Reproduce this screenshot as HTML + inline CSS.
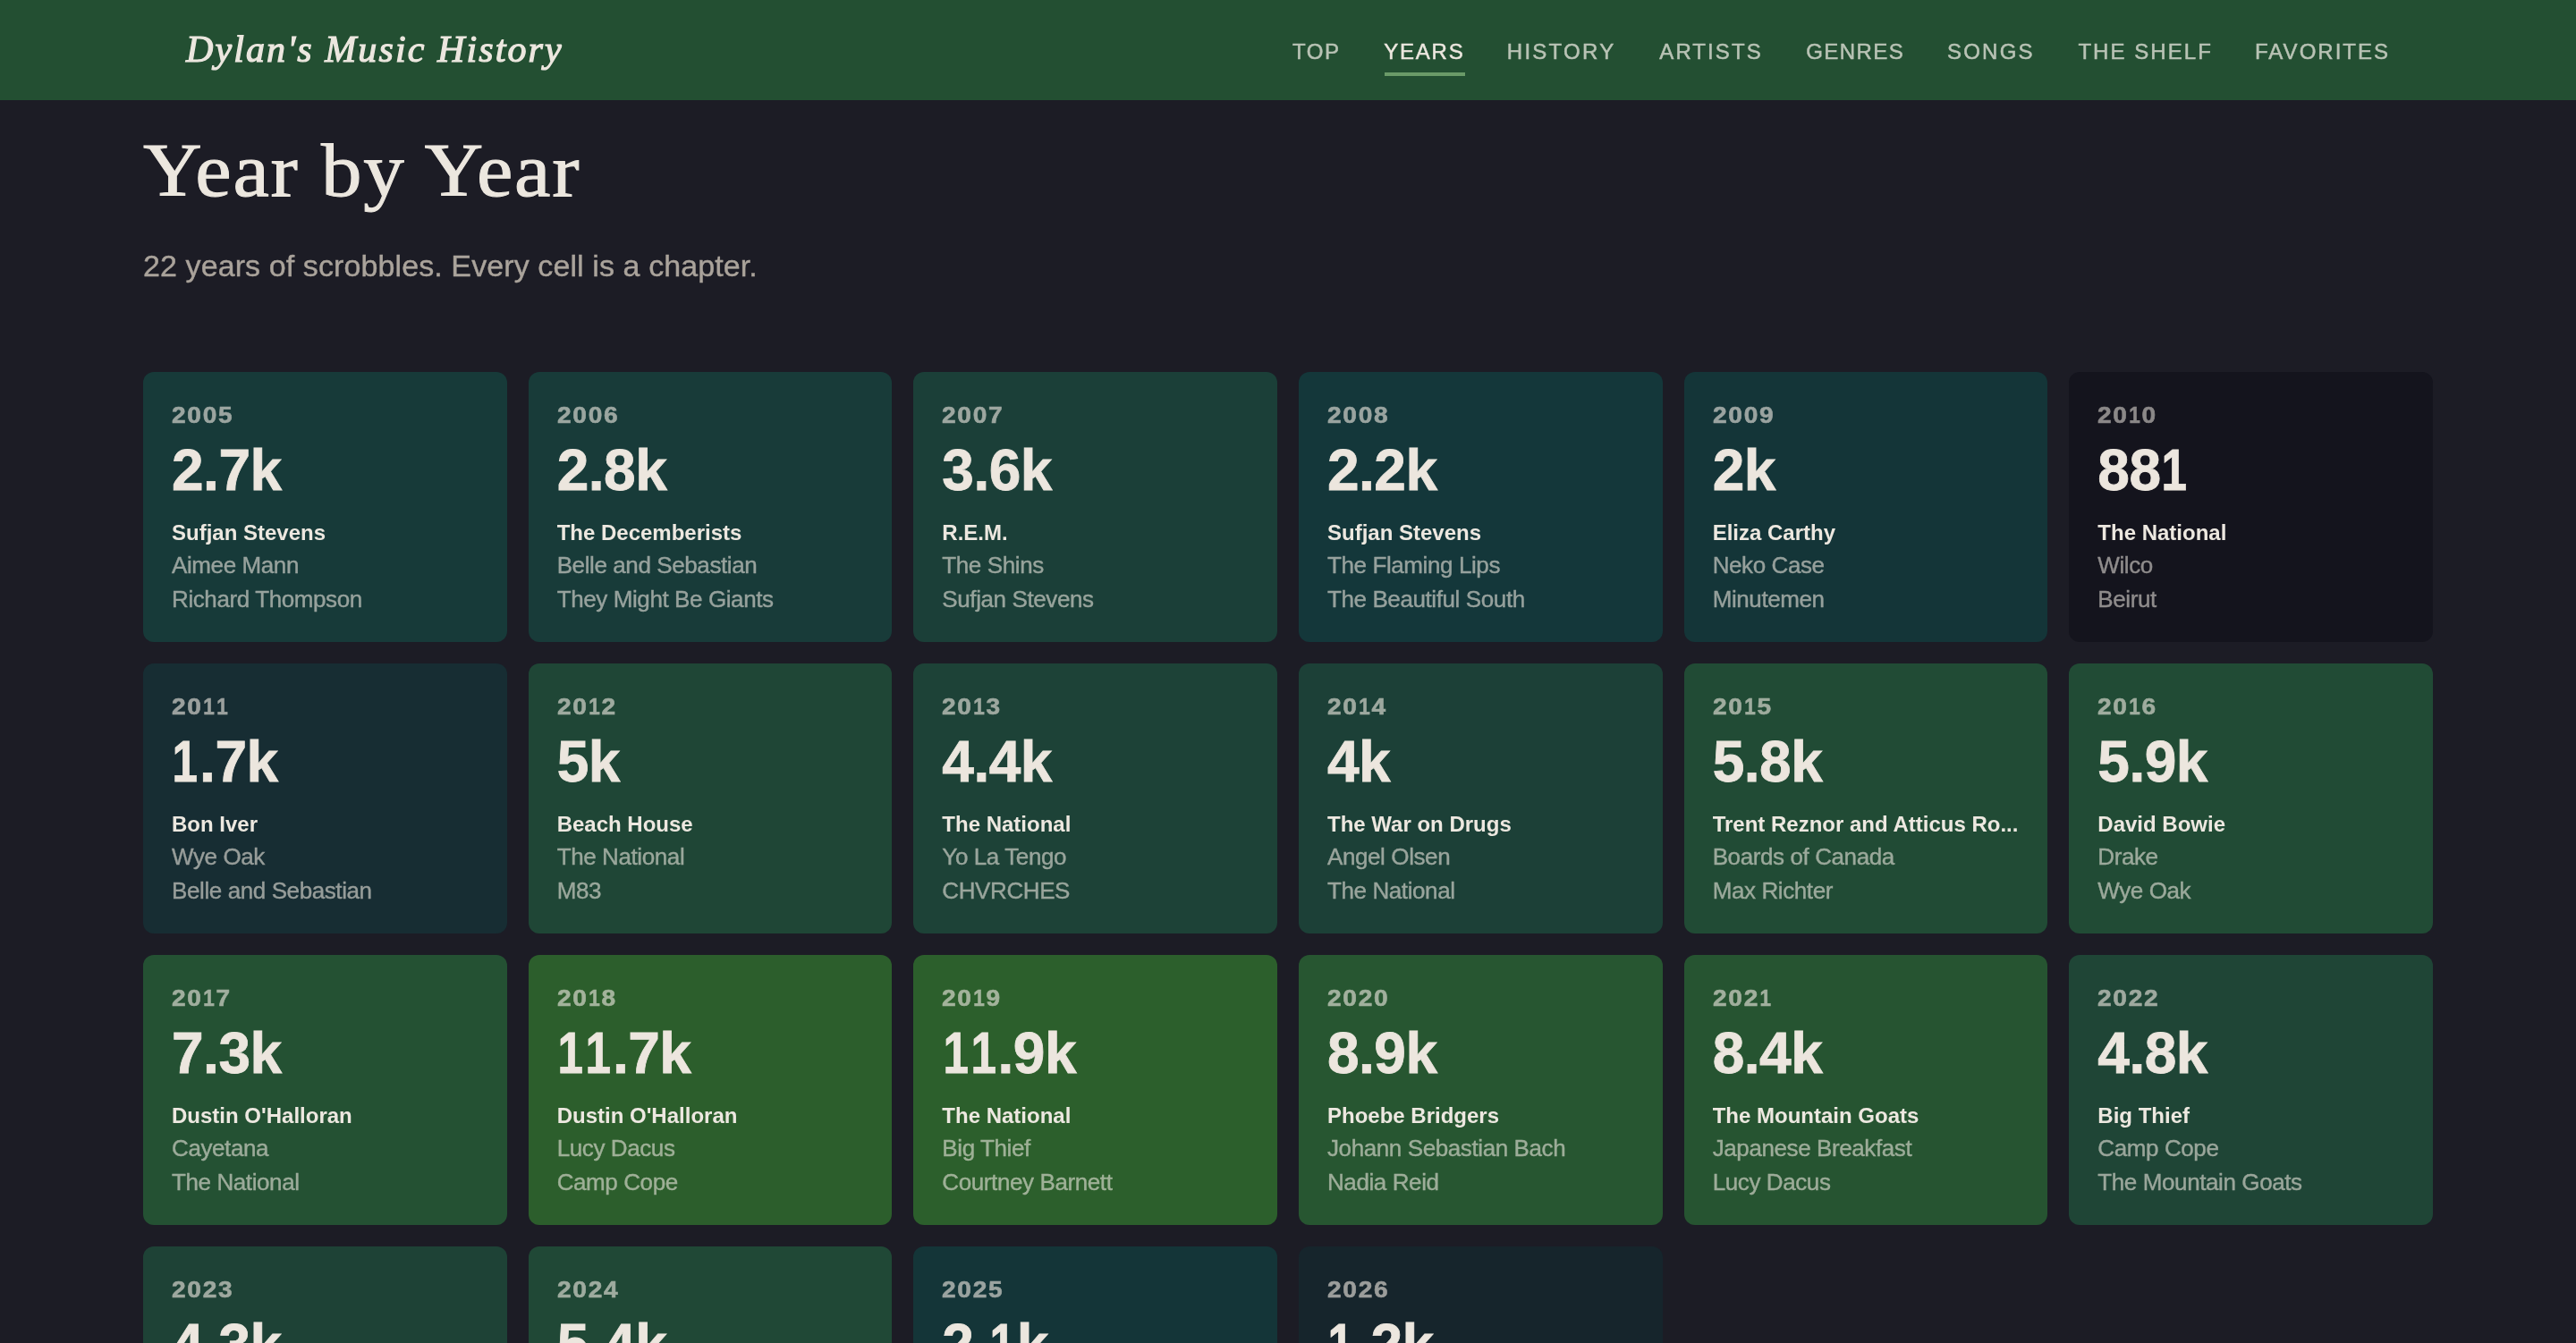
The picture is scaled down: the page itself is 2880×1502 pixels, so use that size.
<!DOCTYPE html>
<html><head><meta charset="utf-8">
<style>
*{margin:0;padding:0;box-sizing:border-box}
html,body{width:1440px;height:751px;overflow:hidden;background:#1c1c25}
body{font-family:"Liberation Sans",sans-serif;color:#ece7df;-webkit-font-smoothing:antialiased}
.hdr{will-change:transform;position:absolute;left:0;top:0;width:1440px;height:56px;background:#234f32}
.logo{position:absolute;left:104px;top:11.6px;font-family:"Liberation Serif",serif;font-style:italic;font-size:21px;letter-spacing:1.05px;line-height:32px;color:#ece7df;white-space:nowrap;-webkit-text-stroke:0.6px #ece7df}
.nav{position:absolute;top:0;left:0;width:1440px;height:56px}
.nav span{position:absolute;top:20px;font-size:12px;line-height:18px;color:#b9c3b5;white-space:nowrap;-webkit-text-stroke:0.25px currentColor}
.nav span.on{color:#ece7df}
.uline{position:absolute;left:774px;top:40px;width:45px;height:2px;transform:translateY(0.5px);background:#6a9a68}
h1{position:absolute;left:80px;top:60.5px;font-family:"Liberation Serif",serif;font-weight:normal;font-size:42px;letter-spacing:0.8px;line-height:70px;color:#ece7df;white-space:nowrap;-webkit-text-stroke:0.5px #ece7df;transform:scaleX(1.083);transform-origin:0 0}
.sub{will-change:transform;position:absolute;left:80px;top:136.7px;font-size:17px;letter-spacing:0.05px;line-height:24px;color:#aaa39b;white-space:nowrap;-webkit-text-stroke:0.2px currentColor}
.grid{will-change:transform;position:absolute;left:80px;top:208px;width:1280px;display:grid;grid-template-columns:repeat(6,1fr);gap:12px}
.card{height:151px;border-radius:6px;padding:14.75px 16px 0 16px;overflow:hidden}
.yr{font-size:13px;font-weight:bold;letter-spacing:0.8px;line-height:18px;transform:scaleX(1.08);transform-origin:0 0;-webkit-text-stroke:0.3px currentColor;position:relative;top:0.2px}
.cnt{font-size:32px;font-weight:bold;line-height:38px;margin-top:3.26px;color:#ece6de;letter-spacing:-0.25px;-webkit-text-stroke:0.4px currentColor}
.a1{font-size:12px;font-weight:bold;line-height:19px;margin-top:6.33px;color:#ede8e0;white-space:nowrap;overflow:hidden}
.card .a1+.a2{margin-top:-1px}
.n1{display:inline-block;transform:scaleX(0.8);margin:0 -0.6px 0 -1.4px}
.y1{display:inline-block;transform:scaleX(0.8);margin:0 -0.6px 0 -0.6px}
.yb{}
.a2{position:relative;top:0px;font-size:13px;letter-spacing:-0.2px;line-height:19px;color:rgba(236,231,223,0.6);white-space:nowrap;-webkit-text-stroke:0.2px currentColor}
</style>
<script>(function(){var z=window.innerWidth/1440;if(z>1.01||z<0.99){document.documentElement.style.zoom=z;}})();</script>
</head><body>
<div class="hdr">
<div class="logo">Dylan's Music History</div>
<div class="nav"><span class="ni" style="left:722.5px;letter-spacing:0.8px">TOP</span><span class="ni on" style="left:773.6px;letter-spacing:0.9px">YEARS</span><span class="ni" style="left:842.4px;letter-spacing:1.13px">HISTORY</span><span class="ni" style="left:927.65px;letter-spacing:1.04px">ARTISTS</span><span class="ni" style="left:1009.65px;letter-spacing:0.7px">GENRES</span><span class="ni" style="left:1088.5px;letter-spacing:1.11px">SONGS</span><span class="ni" style="left:1161.7px;letter-spacing:1.03px">THE SHELF</span><span class="ni" style="left:1260.5px;letter-spacing:1.01px">FAVORITES</span><div class="uline"></div></div>
</div>
<h1>Year by Year</h1>
<div class="sub">22 years of scrobbles. Every cell is a chapter.</div>
<div class="grid">
<div class="card" style="background:#173a39"><div class="yr" style="color:#9ba5a0">2005</div><div class="cnt">2.7k</div><div class="a1">Sufjan Stevens</div><div class="a2" style="color:#97a29d">Aimee Mann</div><div class="a2" style="color:#97a29d">Richard Thompson</div></div>
<div class="card" style="background:#183b39"><div class="yr" style="color:#9ba6a0">2006</div><div class="cnt">2.8k</div><div class="a1">The Decemberists</div><div class="a2" style="color:#97a29d">Belle and Sebastian</div><div class="a2" style="color:#97a29d">They Might Be Giants</div></div>
<div class="card" style="background:#1b3f38"><div class="yr" style="color:#9da7a0">2007</div><div class="cnt">3.6k</div><div class="a1">R.E.M.</div><div class="a2" style="color:#98a49c">The Shins</div><div class="a2" style="color:#98a49c">Sufjan Stevens</div></div>
<div class="card" style="background:#14373a"><div class="yr" style="color:#9aa4a0">2008</div><div class="cnt">2.2k</div><div class="a1">Sufjan Stevens</div><div class="a2" style="color:#96a19d">The Flaming Lips</div><div class="a2" style="color:#96a19d">The Beautiful South</div></div>
<div class="card" style="background:#143538"><div class="yr" style="color:#9aa3a0">2009</div><div class="cnt">2k</div><div class="a1">Eliza Carthy</div><div class="a2" style="color:#96a09c">Neko Case</div><div class="a2" style="color:#96a09c">Minutemen</div></div>
<div class="card" style="background:#14141d"><div class="yr" style="color:#8b8888">2<span class="yb">0</span><span class="y1">1</span>0</div><div class="cnt">88<span class="n1">1</span></div><div class="a1">The National</div><div class="a2" style="color:#8f8c8c">Wilco</div><div class="a2" style="color:#8f8c8c">Beirut</div></div>
<div class="card" style="background:#172d33"><div class="yr" style="color:#9ba09e">2<span class="yb">0</span><span class="y1 yb">1</span><span class="y1">1</span></div><div class="cnt"><span class="n1">1</span>.7k</div><div class="a1">Bon Iver</div><div class="a2" style="color:#979d9a">Wye Oak</div><div class="a2" style="color:#979d9a">Belle and Sebastian</div></div>
<div class="card" style="background:#1f4636"><div class="yr" style="color:#9eaa9f">2<span class="yb">0</span><span class="y1">1</span>2</div><div class="cnt">5k</div><div class="a1">Beach House</div><div class="a2" style="color:#9aa79b">The National</div><div class="a2" style="color:#9aa79b">M83</div></div>
<div class="card" style="background:#1d4237"><div class="yr" style="color:#9da89f">2<span class="yb">0</span><span class="y1">1</span>3</div><div class="cnt">4.4k</div><div class="a1">The National</div><div class="a2" style="color:#99a59c">Yo La Tengo</div><div class="a2" style="color:#99a59c">CHVRCHES</div></div>
<div class="card" style="background:#1c4037"><div class="yr" style="color:#9da89f">2<span class="yb">0</span><span class="y1">1</span>4</div><div class="cnt">4k</div><div class="a1">The War on Drugs</div><div class="a2" style="color:#99a49c">Angel Olsen</div><div class="a2" style="color:#99a49c">The National</div></div>
<div class="card" style="background:#214b35"><div class="yr" style="color:#9fac9e">2<span class="yb">0</span><span class="y1">1</span>5</div><div class="cnt">5.8k</div><div class="a1">Trent Reznor and Atticus Ro...</div><div class="a2" style="color:#9ba99b">Boards of Canada</div><div class="a2" style="color:#9ba99b">Max Richter</div></div>
<div class="card" style="background:#214b35"><div class="yr" style="color:#9fac9e">2<span class="yb">0</span><span class="y1">1</span>6</div><div class="cnt">5.9k</div><div class="a1">David Bowie</div><div class="a2" style="color:#9ba99b">Drake</div><div class="a2" style="color:#9ba99b">Wye Oak</div></div>
<div class="card" style="background:#245133"><div class="yr" style="color:#a0ae9e">2<span class="yb">0</span><span class="y1">1</span>7</div><div class="cnt">7.3k</div><div class="a1">Dustin O'Halloran</div><div class="a2" style="color:#9cab9a">Cayetana</div><div class="a2" style="color:#9cab9a">The National</div></div>
<div class="card" style="background:#2c5e2c"><div class="yr" style="color:#a3b39b">2<span class="yb">0</span><span class="y1">1</span>8</div><div class="cnt"><span class="n1">1</span><span class="n1">1</span>.7k</div><div class="a1">Dustin O'Halloran</div><div class="a2" style="color:#9fb097">Lucy Dacus</div><div class="a2" style="color:#9fb097">Camp Cope</div></div>
<div class="card" style="background:#2c5f2c"><div class="yr" style="color:#a3b39b">2<span class="yb">0</span><span class="y1">1</span>9</div><div class="cnt"><span class="n1">1</span><span class="n1">1</span>.9k</div><div class="a1">The National</div><div class="a2" style="color:#9fb197">Big Thief</div><div class="a2" style="color:#9fb197">Courtney Barnett</div></div>
<div class="card" style="background:#275631"><div class="yr" style="color:#a1b09d">2020</div><div class="cnt">8.9k</div><div class="a1">Phoebe Bridgers</div><div class="a2" style="color:#9dad99">Johann Sebastian Bach</div><div class="a2" style="color:#9dad99">Nadia Reid</div></div>
<div class="card" style="background:#265431"><div class="yr" style="color:#a1af9d">20<span class="yb">2</span><span class="y1">1</span></div><div class="cnt">8.4k</div><div class="a1">The Mountain Goats</div><div class="a2" style="color:#9dac99">Japanese Breakfast</div><div class="a2" style="color:#9dac99">Lucy Dacus</div></div>
<div class="card" style="background:#1f4536"><div class="yr" style="color:#9ea99f">2022</div><div class="cnt">4.8k</div><div class="a1">Big Thief</div><div class="a2" style="color:#9aa69b">Camp Cope</div><div class="a2" style="color:#9aa69b">The Mountain Goats</div></div>
<div class="card" style="background:#1e4236"><div class="yr" style="color:#9ea89f">2023</div><div class="cnt">4.3k</div><div class="a1">The National</div><div class="a2" style="color:#9aa59b">Big Thief</div><div class="a2" style="color:#9aa59b">Phoebe Bridgers</div></div>
<div class="card" style="background:#204836"><div class="yr" style="color:#9eab9f">2024</div><div class="cnt">5.4k</div><div class="a1">The National</div><div class="a2" style="color:#9aa79b">Big Thief</div><div class="a2" style="color:#9aa79b">Camp Cope</div></div>
<div class="card" style="background:#143538"><div class="yr" style="color:#9aa3a0">2025</div><div class="cnt">2.<span class="n1">1</span>k</div><div class="a1">The National</div><div class="a2" style="color:#96a09c">Big Thief</div><div class="a2" style="color:#96a09c">Camp Cope</div></div>
<div class="card" style="background:#16252c"><div class="yr" style="color:#9b9d9b">2026</div><div class="cnt"><span class="n1">1</span>.2k</div><div class="a1">The National</div><div class="a2" style="color:#969997">Big Thief</div><div class="a2" style="color:#969997">Camp Cope</div></div>
</div>
</body></html>
